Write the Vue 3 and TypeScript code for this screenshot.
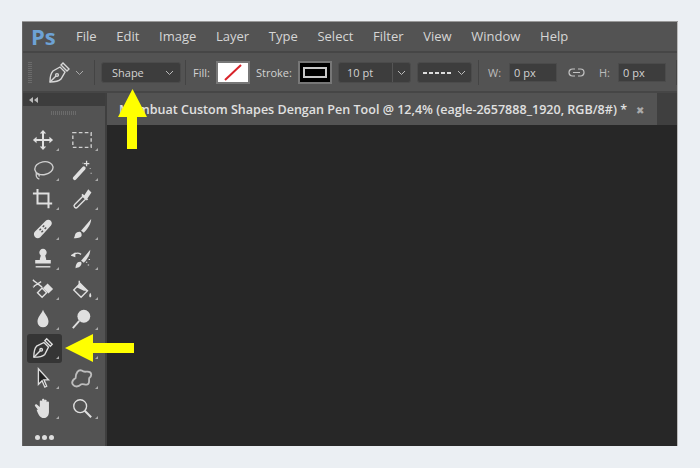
<script setup lang="ts">
const menus = ['File', 'Edit', 'Image', 'Layer', 'Type', 'Select', 'Filter', 'View', 'Window', 'Help']
const tools: { id: string; active?: boolean }[] = [
  { id: 'move' }, { id: 'marquee' }, { id: 'lasso' }, { id: 'wand' },
  { id: 'crop' }, { id: 'dropper' }, { id: 'heal' }, { id: 'brush' },
  { id: 'stamp' }, { id: 'history' }, { id: 'eraser' }, { id: 'bucket' },
  { id: 'drop' }, { id: 'dodge' }, { id: 'pen', active: true }, { id: 'shape' },
  { id: 'select' }, { id: 'blob' }, { id: 'hand' }, { id: 'zoom' },
]
</script>

<template>
  <div class="page">
    <div class="window">
      <header class="menubar">
        <span class="logo">Ps</span>
        <span v-for="m in menus" :key="m" class="menu">{{ m }}</span>
      </header>
      <section class="options">
        <span class="grip"></span>
        <svg class="penopt" width="22" height="22" viewBox="0 0 22 22" fill="none" stroke="#d8d8d8" stroke-width="1.400">
          <path d="M2 20C2 15 3 11 5 9L12 5 17 10 13 17C11 19 7 20 2 20Z" /><path d="M2 20 8 14" /><circle cx="9" cy="13" r="1.400" /><path d="M13 3 15 1 21 7 19 9Z" />
        </svg>
        <svg class="chev" width="9" height="6" viewBox="0 0 9 6" fill="none" stroke="#aaa"><path d="M1 1l3.500 3.500L8 1" /></svg>
        <span class="sep s1"></span>
        <div class="select shape">Shape<svg width="9" height="6" viewBox="0 0 9 6" fill="none" stroke="#bbb"><path d="M1 1l3.500 3.500L8 1" /></svg></div>
        <span class="sep s2"></span>
        <span class="lab fill">Fill:</span>
        <div class="swatch white"><svg width="30" height="17" viewBox="0 0 30 17"><path d="M7 16 23 1" stroke="#d8232a" stroke-width="2" /></svg></div>
        <span class="lab stroke">Stroke:</span>
        <div class="swatch black"><i></i></div>
        <div class="select pt"><span>10 pt</span><b><svg width="9" height="6" viewBox="0 0 9 6" fill="none" stroke="#bbb"><path d="M1 1l3.500 3.500L8 1" /></svg></b></div>
        <div class="select dash"><em></em><svg width="9" height="6" viewBox="0 0 9 6" fill="none" stroke="#bbb"><path d="M1 1l3.500 3.500L8 1" /></svg></div>
        <span class="sep s3"></span>
        <span class="lab w">W:</span>
        <div class="field">0 px</div>
        <svg class="link" width="17" height="9" viewBox="0 0 17 9" fill="none" stroke="#c4c4c4" stroke-width="1.200"><path d="M7 1H4.500a3.500 3.500 0 0 0 0 7H7M10 1h2.500a3.500 3.500 0 0 1 0 7H10M5 4.500h7" /></svg>
        <span class="lab h">H:</span>
        <div class="field">0 px</div>
        <span class="sep s4"></span>
      </section>
      <div class="body">
        <aside class="toolbox">
          <div class="collapse"><svg width="9" height="6" viewBox="0 0 9 6" fill="#bbb"><path d="M4 0v6L0 3ZM9 0v6L5 3Z" /></svg></div>
          <div class="gripbar"></div>
          <div class="grid">
            <div v-for="t in tools" :key="t.id" class="tool" :class="{ active: t.active }">
              <svg width="24" height="24" viewBox="0 0 24 24" fill="none" stroke="#e0e0e0" stroke-width="1.500">
                <template v-if="t.id === 'move'">
                  <path d="M12 3v18M3 12h18" stroke-width="2.200" /><path d="M12 1l3.500 4h-7zM12 23l3.500-4h-7zM1 12l4-3.500v7zM23 12l-4-3.500v7z" fill="#e0e0e0" stroke="none" />
                </template>
                <rect v-else-if="t.id === 'marquee'" x="2" y="4" width="20" height="16" stroke-dasharray="4 2.500" stroke="#d0d0d0" />
                <template v-else-if="t.id === 'lasso'">
                  <ellipse cx="13" cy="10" rx="10" ry="7" transform="rotate(-10 13 10)" stroke="#cfcfcf" /><path d="M5 15c-1 3 0 6 3 7M4 16c2 0 4 1 4 3" stroke="#cfcfcf" />
                </template>
                <template v-else-if="t.id === 'wand'">
                  <path d="M4 21 14 10" stroke-width="4" stroke-linecap="round" /><path d="M17 2v6M14 5h6" stroke-width="1.400" /><path d="M21 10v1M22 15v1M13 4v1" stroke="#bbb" />
                </template>
                <path v-else-if="t.id === 'crop'" d="M1 6h17v16M6 1v16h16" stroke-width="2.200" />
                <template v-else-if="t.id === 'dropper'">
                  <path d="M4 21c-1-1-1-2 0-3l9-9 3 3-9 9c-1 1-2 1-3 0Z" /><path d="M12 7l6 6M15 9l4-6 2 2-4 6z" fill="#e0e0e0" stroke-width="2" />
                </template>
                <template v-else-if="t.id === 'heal'">
                  <path d="M3 15 15 3c1.500-1.500 4-1.500 5.500 0s1.500 4 0 5.500L9 21c-1.500 1.500-4 1.500-5.500 0s-2-4.500-.5-6Z" fill="#e0e0e0" stroke="none" /><path d="M8.500 12l3.500 3.500M12 8.500l3.500 3.500" stroke="#525252" stroke-width="2.400" stroke-dasharray="1.500 1.500" />
                </template>
                <template v-else-if="t.id === 'brush'">
                  <path d="M11 14 22 1c0 5-4 11-8 15Z" fill="#e0e0e0" stroke="none" /><path d="M3 22c1-1 1-3 2-5s5-3 6-1 1 4-1 5-4 1-7 1Z" fill="#e0e0e0" stroke="none" />
                </template>
                <template v-else-if="t.id === 'stamp'">
                  <path d="M9 14c0-2 1-3 1-5a4 4 0 1 1 5 0c0 2 1 3 1 5h5v4H4v-4Z" fill="#e0e0e0" stroke="none" transform="translate(-0.500 -1)" /><path d="M4 20.500h16" />
                </template>
                <template v-else-if="t.id === 'history'">
                  <path d="M11 14 21 2c0 5-3 10-7 14Z" fill="#e0e0e0" stroke="none" /><path d="M5 22c0-3 1-7 5-7 2 0 2 3 0 5s-3 1-5 2Z" fill="#e0e0e0" stroke="none" /><path d="M2 8c3-3 6-3 9-1M1 8l3-2v3zM17 15v1M20 12v1M19 18v1" />
                </template>
                <template v-else-if="t.id === 'eraser'">
                  <path d="M11 22 6 17 11 12 16 17Z" transform="translate(0 -1)" /><path d="M12 11l5-5 6 6-5 5Z" fill="#e0e0e0" stroke="none" /><path d="M2 3l9 7M2 9l8-5M1 2l2 2M1 10l2-1" />
                </template>
                <template v-else-if="t.id === 'bucket'">
                  <path d="M10 6 18 14 11 21 3 13Z" /><path d="M9 8V3" /><path d="M10 6 18 14 14 14 6 10Z" fill="#e0e0e0" stroke="none" /><path d="M21 16c1.500 2 1.500 5 0 5s-1.500-3 0-5Z" fill="#e0e0e0" stroke="none" />
                </template>
                <path v-else-if="t.id === 'drop'" d="M12 2c2 5 6 8 6 13a6 6 0 0 1-12 0c0-5 4-8 6-13Z" fill="#e0e0e0" stroke="none" />
                <template v-else-if="t.id === 'dodge'">
                  <circle cx="14" cy="9" r="7" fill="#e0e0e0" stroke="none" /><path d="M9 14 2 22" stroke-width="2" />
                </template>
                <template v-else-if="t.id === 'pen'">
                  <path d="M2 22C2 17 3 12 5 10L13 6 18 11 14 19C12 21 7 22 2 22Z" /><path d="M2 22 9 15" /><circle cx="10" cy="14" r="1.400" /><path d="M14 4 16 2 22 8 20 10Z" />
                </template>
                <path v-else-if="t.id === 'select'" d="M7 2v17l4-4 3 7 2-1-3-7h5Z" fill="#222" stroke="#ddd" />
                <path v-else-if="t.id === 'blob'" d="M2 19c-2-3 0-5 3-7 0-5 3-10 7-8 2 2 4 1 6 1 5 0 5 5 2 7-1 2 1 6-2 7-3 1-4-1-7 0-3 3-7 3-9 0Z" stroke="#bdbdbd" stroke-width="2" />
                <path v-else-if="t.id === 'hand'" d="M4 14 1 10c-1-1 0-2.500 1.500-2L6 11V5c0-1.500 2.500-1.500 2.500 0v5V3c0-1.500 2.500-1.500 2.500 0v7V4c0-1.500 2.500-1.500 2.500 0v6V6c0-1.500 2.500-1.500 2.500 0v10c0 4-2 7-6 7-3 0-5-2-7.500-9Z" fill="#e0e0e0" stroke="none" transform="translate(2.500 0)" />
                <template v-else-if="t.id === 'zoom'">
                  <circle cx="10" cy="10" r="7" /><path d="M15 15l7 7" stroke-width="2.200" />
                </template>
              </svg>
              <span class="corner"></span>
            </div>
          </div>
          <div class="more"><i></i><i></i><i></i></div>
        </aside>
        <main class="doc">
          <div class="tabs">
            <div class="tab">
              <span class="tabtitle">Membuat Custom Shapes Dengan Pen Tool @ 12,4% (eagle-2657888_1920, RGB/8#) *</span>
              <span class="close">✖</span>
            </div>
          </div>
          <div class="canvas"></div>
        </main>
      </div>
    </div>
    <svg class="arrow up" width="29" height="60" viewBox="0 0 29 60"><path d="M14.500 0 29 28H19V60H9V28H0Z" fill="#ffff00" /></svg>
    <svg class="arrow left" width="69" height="28" viewBox="0 0 69 28"><path d="M0 14 28 0V9H69V19H28V28Z" fill="#ffff00" /></svg>
  </div>
</template>

<style>
html, body { margin: 0; background: #ebeff3; }
</style>

<style scoped>
.page { position: relative; width: 700px; height: 468px; box-sizing: border-box; padding: 21px 22px; background: #ebeff3; font-family: "Open Sans", "Noto Sans", sans-serif; overflow: hidden; }
.window { width: 656px; height: 425px; background: #3f3f3f; display: flex; flex-direction: column; box-shadow: inset 0 1px #999, inset 1px 0 #666, inset -1px 0 #bbb; }
.menubar { height: 31px; background: #535353; display: flex; align-items: center; border-bottom: 2px solid #464646; flex: none; padding: 0 0 1px 8px; margin: 1px 1px 0; box-sizing: border-box; }
.logo { font: 700 22px "Open Sans", sans-serif; color: #6da2d5; width: 45px; margin-top: -1px; }
.menu { font-size: 13px; color: #d6d6d6; margin-right: 19.700px; }
.options { height: 40px; margin: 0 1px; padding-top: 1px; background: #535353; display: flex; align-items: center; flex: none; border-bottom: 2px solid #464646; font-size: 11px; color: #d2d2d2; box-sizing: border-box; }
.grip { width: 4px; height: 22px; margin-left: 5px; background: repeating-linear-gradient(#6b6b6b 0 1px, transparent 1px 2px); }
.penopt { margin-left: 16px; }
.chev { margin-left: 5px; }
.sep { width: 1px; height: 25px; background: #444; flex: none; }
.s1 { margin-left: 10px; }
.s2 { margin: 0 7px 0 4px; }
.s3 { margin: 0 9px 0 6px; }
.s4 { margin-left: 10px; }
.select { background: #3d3d3d; border: 1px solid #4b4b4b; border-radius: 3px; height: 21px; box-sizing: border-box; display: flex; align-items: center; justify-content: space-between; flex: none; }
.shape { width: 80px; margin-left: 6px; padding: 0 6px 0 10px; }
.fill { width: 17px; margin-right: 6px; flex: none; }
.swatch { width: 34px; height: 23px; box-sizing: border-box; border: 2px solid #777; display: flex; align-items: center; justify-content: center; flex: none; }
.white { background: #fff; }
.black { background: #000; }
.black i { width: 20px; height: 7px; border: 2px solid #c8c8c8; }
.stroke { width: 36px; margin: 0 6px; flex: none; }
.pt { width: 73px; margin-left: 6px; }
.pt span { padding-left: 8px; }
.pt b { width: 17px; height: 19px; border-left: 1px solid #555; display: flex; align-items: center; justify-content: center; }
.dash { width: 55px; margin-left: 6px; padding: 0 5px; }
.dash em { width: 30px; height: 2px; background: repeating-linear-gradient(90deg, #ddd 0 4px, transparent 4px 6px); }
.w { width: 14px; margin-right: 7px; color: #bbb; flex: none; }
.h { width: 12px; margin: 0 7px 0 14px; color: #bbb; flex: none; }
.link { margin-left: 11px; flex: none; }
.field { width: 48px; height: 19px; box-sizing: border-box; background: #3d3d3d; border: 1px solid #4b4b4b; padding-left: 4px; line-height: 17px; flex: none; }
.body { flex: 1; display: flex; min-height: 0; gap: 2px; margin: 0 1px; }
.toolbox { width: 82px; background: #535353; display: flex; flex-direction: column; flex: none; position: relative; }
.collapse { height: 13px; background: #3d3d3d; display: flex; align-items: center; padding-left: 6px; flex: none; }
.gripbar { height: 4px; width: 26px; margin: 5px auto 0; flex: none; background: repeating-linear-gradient(90deg, #6b6b6b 0 1px, transparent 1px 2px); }
.grid { display: grid; grid-template-columns: 35px 35px; grid-auto-rows: 29.800px; column-gap: 4px; padding-left: 4px; margin-top: 10px; }
.tool { display: flex; align-items: center; justify-content: center; position: relative; padding-right: 3px; box-sizing: border-box; }
.tool svg { width: 22px; height: 22px; }
.tool.active { background: #353535; border-radius: 3px; }
.corner { position: absolute; right: 3px; bottom: 4px; border-style: solid; border-width: 0 0 3px 3px; border-color: transparent transparent #aaa transparent; }
.more { display: flex; gap: 2px; padding-left: 12px; margin-top: 12px; }
.more i { width: 5px; height: 5px; border-radius: 50%; background: #ddd; }
.doc { flex: 1; display: flex; flex-direction: column; min-width: 0; }
.tabs { height: 32px; background: #3f3f3f; flex: none; display: flex; }
.tab { width: 550px; background: #535353; display: flex; align-items: center; white-space: nowrap; padding: 1px 0 0 12px; box-sizing: border-box; }
.tabtitle { font-size: 12.550px; font-weight: 600; color: #e0e0e0; width: 517px; flex: none; overflow: hidden; }
.close { color: #aaa; font-size: 10px; }
.canvas { flex: 1; background: #272727; }
.arrow { position: absolute; }
.up { left: 118px; top: 89px; }
.left { left: 65px; top: 334px; }
</style>
